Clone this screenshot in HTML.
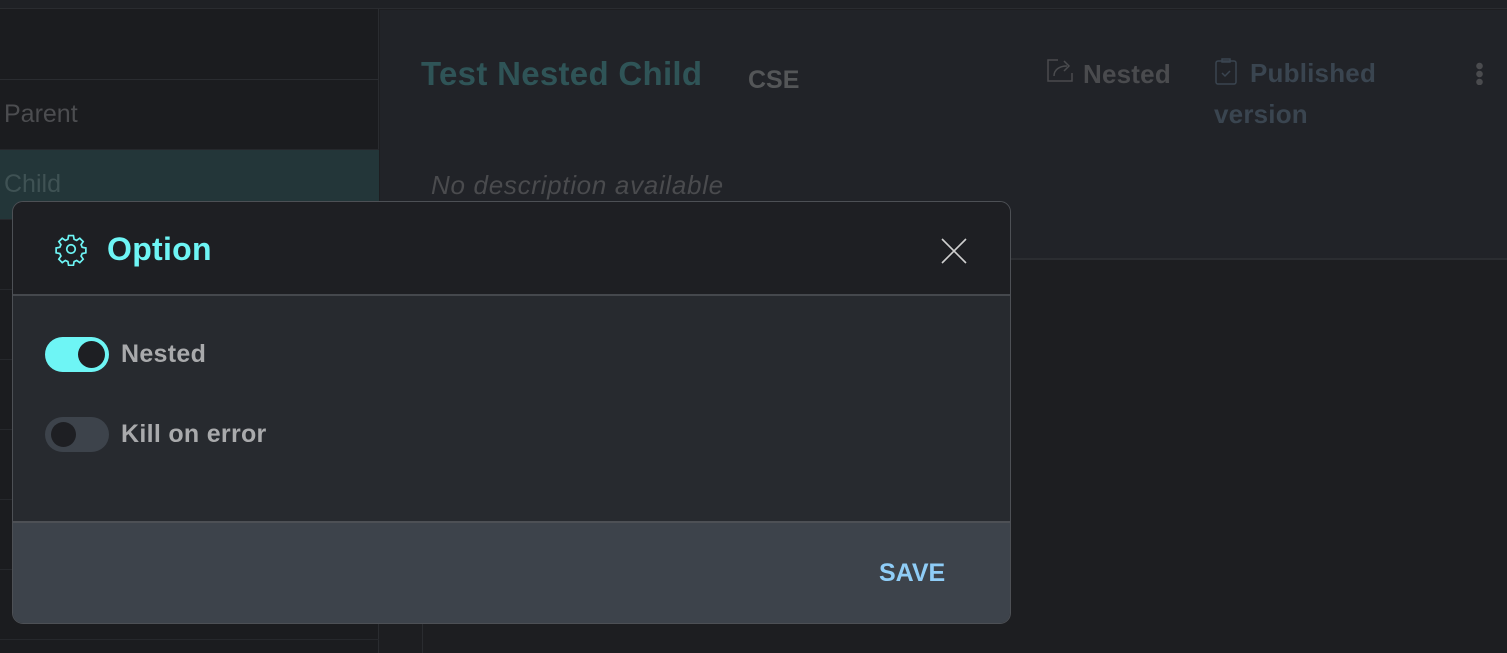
<!DOCTYPE html>
<html><head><meta charset="utf-8"><style>
*{box-sizing:border-box;margin:0;padding:0}
body{width:1507px;height:653px;overflow:hidden;background:#1d1e21;font-family:"Liberation Sans",sans-serif;position:relative}
.abs{position:absolute}
.row{position:absolute;left:0;width:379px;height:70px;border-bottom:1px solid #26282c;color:#4c4d50;font-size:25px;padding:20px 0 0 4px}
</style></head><body>
<div class="abs" style="left:0;top:0;width:1507px;height:9px;background:#1f2125;border-bottom:1px solid #2a2c30"></div>
<div class="abs" style="left:0;top:9px;width:379px;height:644px;background:#1b1c1f;border-right:1px solid #2a2c30"></div>
<div class="abs" style="left:0;top:79px;width:379px;height:1px;background:#2a2c30"></div>
<div class="row" style="top:80px">Parent</div>
<div class="row" style="top:150px;background:#233639;color:#3f5254">Child</div>
<div class="row" style="top:220px"></div><div class="row" style="top:290px"></div><div class="row" style="top:360px"></div><div class="row" style="top:430px"></div><div class="row" style="top:500px"></div><div class="row" style="top:570px"></div>
<div class="abs" style="left:380px;top:10px;width:1127px;height:250px;background:#212328;border-bottom:2px solid #2b2d31"></div>
<div class="abs" style="left:422px;top:260px;width:1px;height:393px;background:#2a2c30"></div>
<div class="abs" style="left:421px;top:55px;font-size:33px;font-weight:bold;color:#2f5457;letter-spacing:0.3px">Test Nested Child</div>
<div class="abs" style="left:748px;top:66px;font-size:25px;font-weight:bold;color:#545658">CSE</div>
<div class="abs" style="left:431px;top:170px;font-size:26px;font-style:italic;color:#4a4b4e;letter-spacing:0.7px">No description available</div>
<svg class="abs" style="left:1046px;top:58px" width="30" height="26" viewBox="0 0 30 26" fill="none" stroke="#4a4b4e" stroke-width="1.5"><path d="M12 2H2v21h24v-8"/><path d="M8 18c0-6 5-10 13-10M18 3l5 5-5 5"/></svg>
<div class="abs" style="left:1083px;top:59px;font-size:26px;font-weight:bold;color:#4a4b4e;letter-spacing:0.2px">Nested</div>
<svg class="abs" style="left:1214px;top:56px" width="26" height="30" viewBox="0 0 26 30" fill="none" stroke="#3a4550" stroke-width="1.5"><rect x="2" y="5" width="20" height="23" rx="2"/><path d="M8 6V3h8v3z"/><path d="M8 17l3 3 5-5"/></svg>
<div class="abs" style="left:1214px;top:53px;font-size:26px;font-weight:bold;color:#3a4550;line-height:41px;width:200px;text-indent:36px;letter-spacing:0.2px">Published version</div>
<div class="abs" style="left:1476px;top:62px;width:7px;height:23px;background:radial-gradient(circle,#4a4b4e 3px,transparent 3.5px) 0 0/7px 8px repeat-y"></div>

<div class="abs" style="left:12px;top:201px;width:999px;height:423px;border:1.5px solid #4d5055;border-radius:11px;overflow:hidden;background:#272a2f">
 <div class="abs" style="left:0;top:0;width:100%;height:94px;background:#1e1f23;border-bottom:2px solid #45484d"></div>
 <svg class="abs" style="left:40px;top:30px" width="36" height="34" viewBox="0 0 24 24" fill="none" stroke="#6ef5f5" stroke-width="1.2"><circle cx="12" cy="12" r="3"/><path d="M10.3 2.5h3.4l.5 2.6 1.8.8 2.2-1.5 2.4 2.4-1.5 2.2.8 1.8 2.6.5v3.4l-2.6.5-.8 1.8 1.5 2.2-2.4 2.4-2.2-1.5-1.8.8-.5 2.6h-3.4l-.5-2.6-1.8-.8-2.2 1.5-2.4-2.4 1.5-2.2-.8-1.8-2.6-.5v-3.4l2.6-.5.8-1.8-1.5-2.2 2.4-2.4 2.2 1.5 1.8-.8z"/></svg>
 <div class="abs" style="left:94px;top:29px;font-size:32px;font-weight:bold;color:#6ef5f5;letter-spacing:0.3px">Option</div>
 <svg class="abs" style="left:928px;top:36px" width="26" height="26" viewBox="0 0 26 26" stroke="#d0d0d0" stroke-width="1.6"><path d="M1 1l24 24M25 1L1 25"/></svg>
 <div class="abs" style="left:32px;top:135px;width:64px;height:35px;border-radius:18px;background:#6ef5f5"></div>
 <div class="abs" style="left:65px;top:139px;width:27px;height:27px;border-radius:50%;background:#1e1f23"></div>
 <div class="abs" style="left:108px;top:138px;font-size:25px;font-weight:bold;color:#a9aaac;letter-spacing:0.3px">Nested</div>
 <div class="abs" style="left:32px;top:215px;width:64px;height:35px;border-radius:18px;background:#3d434b"></div>
 <div class="abs" style="left:38px;top:220px;width:25px;height:25px;border-radius:50%;background:#1e1f23"></div>
 <div class="abs" style="left:108px;top:218px;font-size:25px;font-weight:bold;color:#a9aaac;letter-spacing:0.3px">Kill on error</div>
 <div class="abs" style="left:0;top:319px;width:100%;height:104px;background:#3d434b;border-top:2px solid #4d5055"></div>
 <div class="abs" style="left:866px;top:357px;font-size:25px;font-weight:bold;color:#8fcdf7">SAVE</div>
</div>
</body></html>
